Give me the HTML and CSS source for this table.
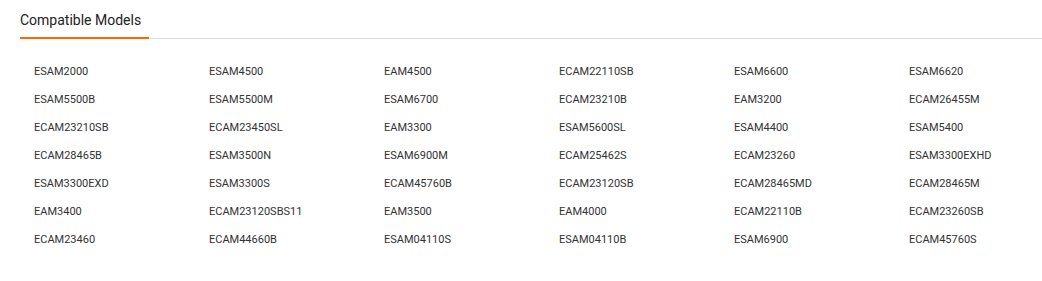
FILE: index.html
```html
<!DOCTYPE html>
<html>
<head>
<meta charset="utf-8">
<link rel="stylesheet" href="styles.css">
</head>
<body>
<section class="models">
  <div class="tabs">
    <h2 class="tab active">Compatible Models</h2>
  </div>
  <ul class="grid">
    <li>ESAM2000</li><li>ESAM4500</li><li>EAM4500</li><li>ECAM22110SB</li><li>ESAM6600</li><li>ESAM6620</li>
    <li>ESAM5500B</li><li>ESAM5500M</li><li>ESAM6700</li><li>ECAM23210B</li><li>EAM3200</li><li>ECAM26455M</li>
    <li>ECAM23210SB</li><li>ECAM23450SL</li><li>EAM3300</li><li>ESAM5600SL</li><li>ESAM4400</li><li>ESAM5400</li>
    <li>ECAM28465B</li><li>ESAM3500N</li><li>ESAM6900M</li><li>ECAM25462S</li><li>ECAM23260</li><li>ESAM3300EXHD</li>
    <li>ESAM3300EXD</li><li>ESAM3300S</li><li>ECAM45760B</li><li>ECAM23120SB</li><li>ECAM28465MD</li><li>ECAM28465M</li>
    <li>EAM3400</li><li>ECAM23120SBS11</li><li>EAM3500</li><li>EAM4000</li><li>ECAM22110B</li><li>ECAM23260SB</li>
    <li>ECAM23460</li><li>ECAM44660B</li><li>ESAM04110S</li><li>ESAM04110B</li><li>ESAM6900</li><li>ECAM45760S</li>
  </ul>
</section>
</body>
</html>
```
FILE: styles.css
```css
html, body {
  margin: 0;
  padding: 0;
  background: #fff;
}
body {
  font-family: Roboto, "Liberation Sans", Arial, sans-serif;
  color: #333;
  overflow: hidden;
}
.models {
  padding: 10px 0 0 20px;
}
.tabs {
  display: flex;
  border-bottom: 1px solid #dddddd;
}
.tab {
  margin: 0 0 -1px 0;
  font-size: 14px;
  font-weight: 400;
  line-height: 20px;
  color: #222;
  padding: 0 4px 7px 0;
  border-bottom: 2px solid #ff6600;
  width: 125px;
}
.grid {
  list-style: none;
  margin: 0;
  padding: 25px 0 0 14px;
  display: grid;
  grid-template-columns: repeat(6, 175px);
  grid-auto-rows: 28px;
}
.grid li {
  font-size: 11px;
  line-height: 16px;
  color: #333;
}
```
